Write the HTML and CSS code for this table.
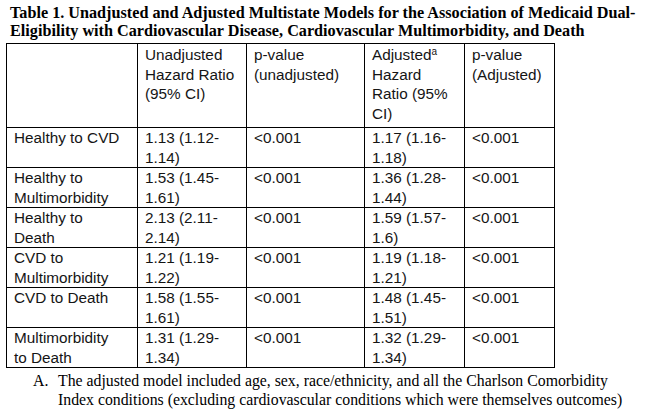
FILE: index.html
```html
<!DOCTYPE html>
<html>
<head>
<meta charset="utf-8">
<link rel="stylesheet" href="styles.css">
</head>
<body>
<div class="page">
  <h1 class="title">Table 1. Unadjusted and Adjusted Multistate Models for the Association of Medicaid Dual-Eligibility with Cardiovascular Disease, Cardiovascular Multimorbidity, and Death</h1>
  <table class="data">
    <colgroup>
      <col class="c1"><col class="c2"><col class="c3"><col class="c4"><col class="c5">
    </colgroup>
    <thead>
      <tr>
        <th></th>
        <th>Unadjusted Hazard Ratio (95% CI)</th>
        <th>p-value (unadjusted)</th>
        <th>Adjusted<sup>a</sup> Hazard Ratio (95% CI)</th>
        <th>p-value (Adjusted)</th>
      </tr>
    </thead>
    <tbody>
      <tr><td>Healthy to CVD</td><td>1.13 (1.12-1.14)</td><td>&lt;0.001</td><td>1.17 (1.16-1.18)</td><td>&lt;0.001</td></tr>
      <tr><td>Healthy to Multimorbidity</td><td>1.53 (1.45-1.61)</td><td>&lt;0.001</td><td>1.36 (1.28-1.44)</td><td>&lt;0.001</td></tr>
      <tr><td>Healthy to Death</td><td>2.13 (2.11-2.14)</td><td>&lt;0.001</td><td>1.59 (1.57-1.6)</td><td>&lt;0.001</td></tr>
      <tr><td>CVD to Multimorbidity</td><td>1.21 (1.19-1.22)</td><td>&lt;0.001</td><td>1.19 (1.18-1.21)</td><td>&lt;0.001</td></tr>
      <tr><td>CVD to Death</td><td>1.58 (1.55-1.61)</td><td>&lt;0.001</td><td>1.48 (1.45-1.51)</td><td>&lt;0.001</td></tr>
      <tr><td>Multimorbidity to Death</td><td>1.31 (1.29-1.34)</td><td>&lt;0.001</td><td>1.32 (1.29-1.34)</td><td>&lt;0.001</td></tr>
    </tbody>
  </table>
  <ol class="notes">
    <li><span class="marker">A.</span><span class="note-text">The adjusted model included age, sex, race/ethnicity, and all the Charlson Comorbidity Index conditions (excluding cardiovascular conditions which were themselves outcomes)</span></li>
  </ol>
</div>
</body>
</html>
```

FILE: styles.css
```css
html, body {
  margin: 0;
  padding: 0;
  background: #ffffff;
}

.page {
  padding: 3.5px 6px 0 6px;
  color: #000;
}

.title {
  margin: 0 0 3.5px 4px;
  font-family: "Liberation Serif", "Times New Roman", serif;
  font-weight: bold;
  font-size: 16.2px;
  line-height: 18px;
  width: 634px;
}

.data {
  border-collapse: collapse;
  font-family: "Liberation Sans", Arial, sans-serif;
  font-size: 15.3px;
  line-height: 19.5px;
  color: #151515;
  table-layout: fixed;
  width: 548px;
}

.c1 { width: 131px; }
.c2 { width: 109px; }
.c3 { width: 118px; }
.c4 { width: 100px; }
.c5 { width: 90px; }

.data th, .data td {
  border: 1px solid #000;
  padding: 0 9px 0 7px;
  vertical-align: top;
  text-align: left;
  font-weight: normal;
}

.data td:first-child {
  padding-right: 13px;
}

.data thead th {
  padding-top: 1px;
  padding-bottom: 4px;
}

.data sup {
  font-size: 10px;
  line-height: 0;
  vertical-align: 5px;
}

.notes {
  list-style: none;
  margin: 4px 0 0 0;
  padding: 0;
  font-family: "Liberation Serif", "Times New Roman", serif;
  font-size: 15.8px;
  line-height: 18.5px;
}

.notes li {
  display: flex;
}

.marker {
  width: 25px;
  padding-left: 27px;
  flex: none;
}

.note-text {
  width: 575px;
}
```
